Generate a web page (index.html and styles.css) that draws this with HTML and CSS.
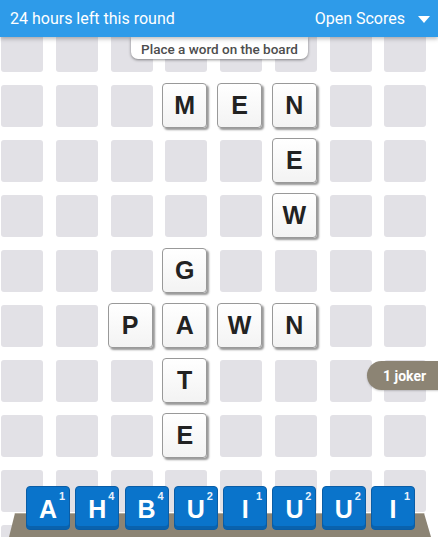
FILE: index.html
```html
<!DOCTYPE html>
<html>
<head>
<meta charset="utf-8">
<link rel="stylesheet" href="styles.css">
</head>
<body>
<div class="app">
  <header class="topbar">
    <span class="round">24 hours left this round</span>
    <span class="scores">Open Scores <span class="caret"></span></span>
  </header>
  <div class="hint">Place a word on the board</div>

  <main class="board">
    <!-- row 0 -->
    <div class="cell"></div><div class="cell"></div><div class="cell"></div><div class="cell"></div><div class="cell"></div><div class="cell"></div><div class="cell"></div><div class="cell"></div>
    <!-- row 1 -->
    <div class="cell"></div><div class="cell"></div><div class="cell"></div>
    <div class="cell"><div class="tile">M</div></div>
    <div class="cell"><div class="tile">E</div></div>
    <div class="cell"><div class="tile">N</div></div>
    <div class="cell"></div><div class="cell"></div>
    <!-- row 2 -->
    <div class="cell"></div><div class="cell"></div><div class="cell"></div><div class="cell"></div><div class="cell"></div>
    <div class="cell"><div class="tile">E</div></div>
    <div class="cell"></div><div class="cell"></div>
    <!-- row 3 -->
    <div class="cell"></div><div class="cell"></div><div class="cell"></div><div class="cell"></div><div class="cell"></div>
    <div class="cell"><div class="tile">W</div></div>
    <div class="cell"></div><div class="cell"></div>
    <!-- row 4 -->
    <div class="cell"></div><div class="cell"></div><div class="cell"></div>
    <div class="cell"><div class="tile">G</div></div>
    <div class="cell"></div><div class="cell"></div><div class="cell"></div><div class="cell"></div>
    <!-- row 5 -->
    <div class="cell"></div><div class="cell"></div>
    <div class="cell"><div class="tile">P</div></div>
    <div class="cell"><div class="tile">A</div></div>
    <div class="cell"><div class="tile">W</div></div>
    <div class="cell"><div class="tile">N</div></div>
    <div class="cell"></div><div class="cell"></div>
    <!-- row 6 -->
    <div class="cell"></div><div class="cell"></div><div class="cell"></div>
    <div class="cell"><div class="tile">T</div></div>
    <div class="cell"></div><div class="cell"></div><div class="cell"></div><div class="cell"></div>
    <!-- row 7 -->
    <div class="cell"></div><div class="cell"></div><div class="cell"></div>
    <div class="cell"><div class="tile">E</div></div>
    <div class="cell"></div><div class="cell"></div><div class="cell"></div><div class="cell"></div>
    <!-- row 8 -->
    <div class="cell"></div><div class="cell"></div><div class="cell"></div><div class="cell"></div><div class="cell"></div><div class="cell"></div><div class="cell"></div><div class="cell"></div>
    <!-- row 9 -->
    <div class="cell"></div><div class="cell"></div><div class="cell"></div><div class="cell"></div><div class="cell"></div><div class="cell"></div><div class="cell"></div><div class="cell"></div>
  </main>

  <div class="joker">1 joker</div>

  <div class="rack">
    <div class="rack-base"></div>
    <div class="rack-tiles">
      <div class="rtile"><span class="rl">A</span><span class="rs">1</span></div>
      <div class="rtile"><span class="rl">H</span><span class="rs">4</span></div>
      <div class="rtile"><span class="rl">B</span><span class="rs">4</span></div>
      <div class="rtile"><span class="rl">U</span><span class="rs">2</span></div>
      <div class="rtile"><span class="rl">I</span><span class="rs">1</span></div>
      <div class="rtile"><span class="rl">U</span><span class="rs">2</span></div>
      <div class="rtile"><span class="rl">U</span><span class="rs">2</span></div>
      <div class="rtile"><span class="rl">I</span><span class="rs">1</span></div>
    </div>
  </div>
</div>
</body>
</html>
```

FILE: styles.css
```css
html, body {
  margin: 0;
  padding: 0;
  height: 537px;
  overflow: hidden;
  background: #ffffff;
}

.app {
  position: relative;
  width: 438px;
  height: 537px;
  overflow: hidden;
  font-family: Roboto, "Liberation Sans", sans-serif;
}

.topbar {
  position: absolute;
  top: 0;
  left: 0;
  right: 0;
  height: 37px;
  z-index: 5;
  background: #2e9be9;
  color: #ffffff;
  display: flex;
  align-items: center;
  justify-content: space-between;
  padding: 0 8px 0 10px;
  font-size: 16px;
  box-shadow: 0 2px 4px rgba(0, 0, 0, 0.25);
}

.scores {
  display: flex;
  align-items: center;
  gap: 13px;
}

.caret {
  width: 0;
  height: 0;
  border-left: 6.5px solid transparent;
  border-right: 6.5px solid transparent;
  border-top: 7px solid #ffffff;
  margin-top: 1px;
}

.hint {
  position: absolute;
  top: 37px;
  left: 131px;
  width: 177px;
  height: 22px;
  z-index: 4;
  box-sizing: border-box;
  background: #ffffff;
  border-radius: 0 0 7px 7px;
  box-shadow: 0 1px 3px rgba(0, 0, 0, 0.45);
  color: #4d4d4d;
  font-size: 13.5px;
  font-weight: 500;
  display: flex;
  align-items: center;
  justify-content: center;
  padding-top: 1px;
}

.board {
  display: grid;
  grid-template-columns: repeat(8, 54.75px);
  grid-auto-rows: 55px;
  padding-top: 30px;
}

.cell {
  width: 42px;
  height: 42px;
  margin-left: 1px;
  background: #e2e1e6;
  border-radius: 3px;
}

.tile {
  width: 45px;
  height: 45px;
  margin: -2px 0 0 -3px;
  box-sizing: border-box;
  background: linear-gradient(#ffffff, #f3f3f3);
  border: 1.5px solid #999999;
  border-radius: 4px;
  box-shadow: 2px 2px 2px rgba(0, 0, 0, 0.4);
  display: flex;
  align-items: center;
  justify-content: center;
  font-family: "Liberation Sans", Arial, sans-serif;
  font-weight: bold;
  font-size: 25px;
  color: #222222;
}

.joker {
  position: absolute;
  top: 361px;
  left: 367px;
  width: 90px;
  height: 29px;
  z-index: 3;
  background: #8c8474;
  border-radius: 15px 0 0 15px;
  color: #ffffff;
  font-weight: bold;
  font-size: 14px;
  display: flex;
  align-items: center;
  padding-left: 16px;
  box-sizing: border-box;
  box-shadow: 0 1px 2px rgba(0, 0, 0, 0.2);
}

.rack {
  position: absolute;
  left: 0;
  right: 0;
  top: 486px;
  height: 51px;
  z-index: 3;
}

.rack-base {
  position: absolute;
  left: 0;
  right: 0;
  top: 27px;
  height: 24px;
  background: #8c8474;
  clip-path: polygon(15px 0, 424px 0, 431px 24px, 9px 24px);
}

.rack-base::before {
  content: "";
  display: block;
  height: 1px;
  background: #b2ab9d;
}

.rack-tiles {
  position: relative;
  display: flex;
  gap: 5.3px;
  padding-left: 26px;
}

.rtile {
  position: relative;
  width: 44px;
  height: 44px;
  box-sizing: border-box;
  background: #0a74cb;
  border: 1px solid #0a5da6;
  border-radius: 4px;
  box-shadow: inset 0 -3px 0 #0a62ad;
  display: flex;
  align-items: center;
  justify-content: center;
  color: #ffffff;
  font-family: "Liberation Sans", Arial, sans-serif;
  font-weight: bold;
}

.rl {
  font-size: 25px;
  margin-top: 2px;
}

.rs {
  position: absolute;
  top: 4px;
  right: 4px;
  font-size: 11px;
  line-height: 1;
  color: #e8f2fb;
}
```
